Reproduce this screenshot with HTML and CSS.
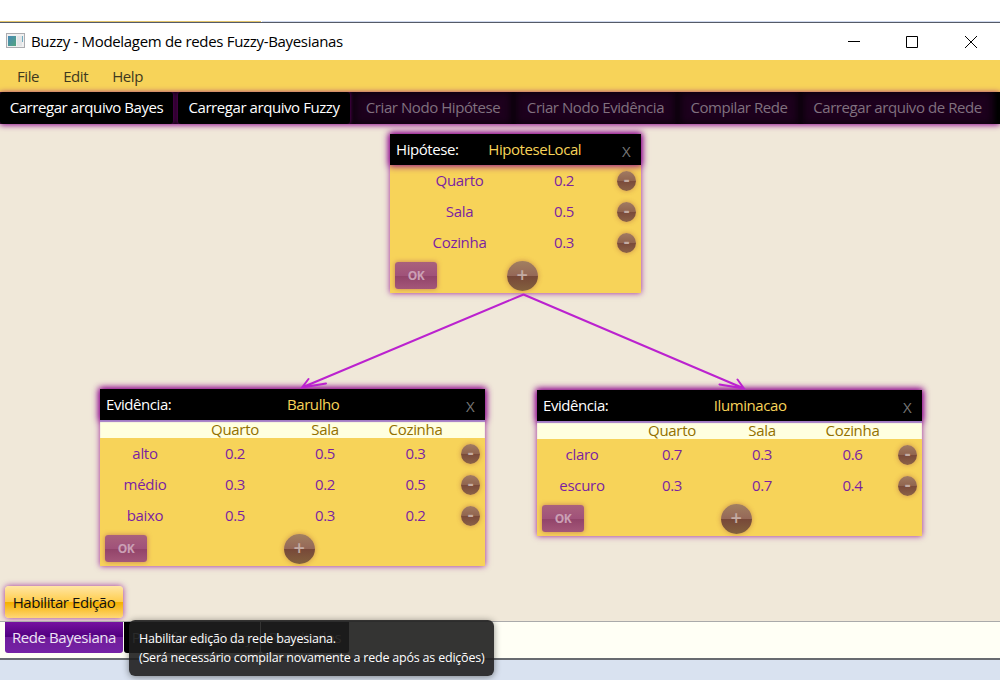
FILE: index.html
```html
<!DOCTYPE html>
<html lang="pt-BR">
<head>
<meta charset="utf-8">
<title>Buzzy - Modelagem de redes Fuzzy-Bayesianas</title>
<link rel="stylesheet" href="styles.css">
</head>
<body>
<div class="desktop-strip"></div>
<header class="titlebar">
  <svg class="app-icon" width="19" height="16" viewBox="0 0 19 16"><defs><linearGradient id="g" x1="0" y1="0" x2="1" y2="1"><stop offset="0" stop-color="#4688b8"/><stop offset="1" stop-color="#54a57e"/></linearGradient></defs><rect x=".5" y=".5" width="18" height="14" fill="#f0f0f0" stroke="#acacb0"/><rect x="2" y="3" width="8" height="10" fill="url(#g)"/><rect x="11" y="3" width="5" height="10" fill="#e3e5e7"/><rect x="16" y="3" width="1" height="6" fill="#70acc0"/></svg>
  <h1 class="title">Buzzy - Modelagem de redes Fuzzy-Bayesianas</h1>
  <svg class="win-buttons" width="130" height="14" viewBox="0 0 130 14" fill="none" stroke="#000"><path d="M0 6.5H12M58.5 1.5h11v11h-11zM117 1l12 12M129 1l-12 12"/></svg>
</header>
<nav class="menubar"><span>File</span><span>Edit</span><span>Help</span></nav>
<div class="toolbar">
  <button class="tool w1">Carregar arquivo Bayes</button>
  <button class="tool w2">Carregar arquivo Fuzzy</button>
  <button class="tool off w3">Criar Nodo Hipótese</button>
  <button class="tool off w4">Criar Nodo Evidência</button>
  <button class="tool off w5">Compilar Rede</button>
  <button class="tool off w6">Carregar arquivo de Rede</button>
</div>
<main class="canvas">
  <section class="node hypothesis">
    <div class="head"><span>Hipótese:</span><b>HipoteseLocal</b><i>X</i></div>
    <div class="row"><span>Quarto</span><span>0.2</span><em class="minus">-</em></div>
    <div class="row"><span>Sala</span><span>0.5</span><em class="minus">-</em></div>
    <div class="row"><span>Cozinha</span><span>0.3</span><em class="minus">-</em></div>
    <div class="foot"><span class="ok">OK</span><span class="plus">+</span></div>
  </section>
  <section class="node noise">
    <div class="head"><span>Evidência:</span><b>Barulho</b><i>X</i></div>
    <div class="row states"><span></span><span>Quarto</span><span>Sala</span><span>Cozinha</span></div>
    <div class="row"><span>alto</span><span>0.2</span><span>0.5</span><span>0.3</span><em class="minus">-</em></div>
    <div class="row"><span>médio</span><span>0.3</span><span>0.2</span><span>0.5</span><em class="minus">-</em></div>
    <div class="row"><span>baixo</span><span>0.5</span><span>0.3</span><span>0.2</span><em class="minus">-</em></div>
    <div class="foot"><span class="ok">OK</span><span class="plus">+</span></div>
  </section>
  <section class="node light">
    <div class="head"><span>Evidência:</span><b>Iluminacao</b><i>X</i></div>
    <div class="row states"><span></span><span>Quarto</span><span>Sala</span><span>Cozinha</span></div>
    <div class="row"><span>claro</span><span>0.7</span><span>0.3</span><span>0.6</span><em class="minus">-</em></div>
    <div class="row"><span>escuro</span><span>0.3</span><span>0.7</span><span>0.4</span><em class="minus">-</em></div>
    <div class="foot"><span class="ok">OK</span><span class="plus">+</span></div>
  </section>
  <svg class="edges" width="1000" height="497" viewBox="0 124 1000 497" fill="none" stroke="#bb22cf" stroke-width="2" stroke-linecap="round"><path d="M523.5 294.5L302 387.5M308.500 379L302 387.500L326 383.500M523.500 294.500L744 388.500M737.500 379.500L744 388.500L719.500 384.500"/></svg>
  <button class="enable">Habilitar Edição</button>
</main>
<footer class="tabs">
  <span class="tab active">Rede Bayesiana</span><span class="tab second">Pertinências Fuzzy</span><span class="tab third">Resultados</span>
  <div class="tooltip">Habilitar edição da rede bayesiana.<br><span>(Será necessário compilar novamente a rede após as edições)</span></div>
</footer>
</body>
</html>
```
FILE: styles.css
```css
* { box-sizing: border-box; }
body { margin: 0; width: 1000px; height: 680px; overflow: hidden; background: #d9e2f0; font: 15px/20px "Open Sans", "Noto Sans", sans-serif; letter-spacing: -.43px; display: flex; flex-direction: column; }
button { font: inherit; letter-spacing: inherit; border: 0; padding: 0; white-space: nowrap; }
.desktop-strip { height: 23px; flex: none; background: linear-gradient(#555b68, #555b68) 0 22px / 100% 1px no-repeat, linear-gradient(#e2c46a, #e2c46a) 0 21px / 261px 1px no-repeat, linear-gradient(#cfd9ee, #cfd9ee) 262px 21px / 738px 1px no-repeat, #fff; }
.titlebar { height: 37px; flex: none; background: #fff; display: flex; align-items: center; padding: 0 22px 0 6px; }
.title { margin: 0 auto 0 6px; padding-bottom: 1px; font-size: inherit; font-weight: 400; letter-spacing: -.32px; white-space: nowrap; }
.app-icon { margin-top: -1px; }
.menubar { height: 32px; flex: none; background: #f7d359; color: #40391f; display: flex; align-items: center; gap: 24px; padding: 0 17px; letter-spacing: -.4px; }
.toolbar { height: 32px; flex: none; background: #000; display: flex; gap: 5px; position: relative; z-index: 1; box-shadow: 0 1px 6px #8b008b; }
.tool { height: 32px; background: #000; color: #fff; border-radius: 3px; text-align: center; padding-bottom: 2px; box-shadow: 0 0 5px 1px #680068; clip-path: inset(0 -5px 0 -5px); flex: none; }
.off { background: #1d001d; color: #80717f; box-shadow: inset 0 0 6px 1px #0b000b, 0 0 5px 2px #160016; }
.w1 { width: 173px; } .w2 { width: 172px; } .w3 { width: 156px; } .w4 { width: 159px; } .w5 { width: 118px; } .w6 { width: 189px; }
.canvas { height: 497px; flex: none; position: relative; background: #f0e8d9; }
.node { position: absolute; background: #f7d359; box-shadow: 0 0 6px rgba(139, 0, 139, .85); color: #7b1fa2; }
.hypothesis { left: 390px; top: 10px; width: 251px; }
.noise { left: 100px; top: 265px; width: 385px; }
.light { left: 537px; top: 266px; width: 385px; }
.head { height: 31px; background: #000; color: #fff; display: flex; align-items: center; padding: 0 0 1px 6px; box-shadow: 0 0 7px 1px #8b008b; }
.head b { flex: 1; text-align: center; font-weight: 400; color: #f7d359; }
.head i { width: 30px; font-style: normal; text-align: center; color: #777; padding-top: 3px; }
.row { height: 31px; display: grid; grid-template-columns: 90px 90px 90px 91px 1fr; align-items: center; text-align: center; padding-right: 5px; letter-spacing: -.3px; }
.row > span { padding-bottom: 1px; }
.hypothesis .row { grid-template-columns: 139px 70px 1fr; }
.states { height: 18px; line-height: 17px; background: #ffffdf; color: #927000; position: relative; box-shadow: inset 0 2px 1px #a27ac5; }
.states > span { padding: 0; }
.minus { justify-self: end; width: 19px; height: 20px; border-radius: 50%; background: linear-gradient(#a17a62, #91654f 48%, #7a4a3a 50%, #8b6247); box-shadow: 0 0 5px rgba(150, 60, 60, .45); color: #c4aba3; font: bold 18px/17px "Open Sans", sans-serif; }
.foot { height: 35px; display: flex; align-items: center; justify-content: space-between; padding: 0 34px 0 5px; }
.ok { width: 42px; height: 27px; line-height: 27px; border-radius: 3px; text-align: center; font-size: 12px; font-weight: 700; color: #cba0b5; background: linear-gradient(#a9617c, #a0527a 50%, #914369 51%, #a45779); box-shadow: 0 0 5px rgba(160, 60, 90, .55); }
.plus { width: 31px; height: 30px; line-height: 28px; margin: 0 auto; border-radius: 50%; text-align: center; font-size: 20px; font-weight: 600; color: #c4aba3; background: linear-gradient(#a17f60, #956858 49%, #774838 51%, #83613e); box-shadow: 0 0 5px rgba(150, 60, 60, .45); }
.edges { position: absolute; left: 0; top: 0; }
.enable { position: absolute; left: 5px; top: 462px; width: 118px; height: 32px; padding-bottom: 1px; border-radius: 4px; background: linear-gradient(#ffe6a4, #ffcd4d 49%, #f5b000 51%, #ffd777); box-shadow: 0 0 6px rgba(139, 0, 139, .8); color: #111; }
.tabs { height: 39px; flex: none; position: relative; background: #fffff5; border-top: 1px solid #aaa; border-bottom: 2px solid #686b70; padding-left: 5px; display: flex; gap: 1px; }
.tab { height: 31px; line-height: 30px; background: #000; color: #999; text-align: center; border-radius: 0 0 3px 3px; white-space: nowrap; }
.active { width: 118px; color: #eee3f5; background: linear-gradient(#7612a0, #510080 47%, #701c9b 49%, #7523a5); }
.second { width: 136px; }
.third { width: 88px; }
.tooltip { position: absolute; left: 129px; top: -2px; width: 365px; height: 56px; padding: 9px 10px; border-radius: 6px; background: rgba(30, 30, 30, .9); color: #fff; font-size: 12.5px; line-height: 19px; letter-spacing: -.21px; white-space: nowrap; box-shadow: 0 1px 7px rgba(0, 0, 0, .45); }
```
